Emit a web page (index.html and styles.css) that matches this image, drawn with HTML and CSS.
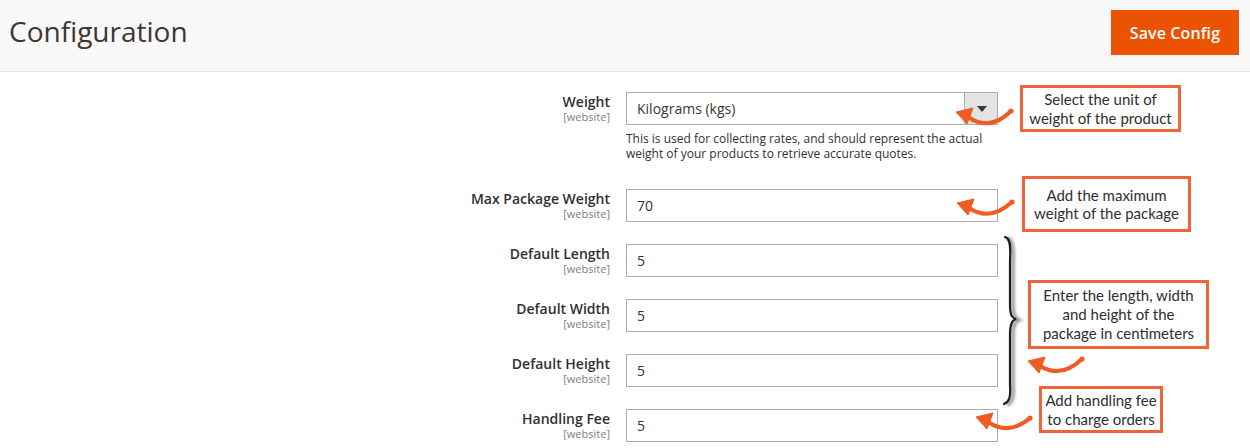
FILE: index.html
```html
<!DOCTYPE html>
<html lang="en">
<head>
<meta charset="utf-8">
<title>Configuration</title>
<link rel="stylesheet" href="styles.css">
</head>
<body>
<header class="page-header">
  <h1 class="page-title">Configuration</h1>
  <button class="btn-primary" type="button">Save Config</button>
</header>

<main class="config-form">
  <div class="field field-weight">
    <div class="field-label"><span class="name">Weight</span><span class="scope">[website]</span></div>
    <div class="field-control">
      <div class="select"><span class="select-value">Kilograms (kgs)</span><span class="select-arrow"></span></div>
      <p class="note">This is used for collecting rates, and should represent the actual weight of your products to retrieve accurate quotes.</p>
    </div>
  </div>
  <div class="field">
    <div class="field-label"><span class="name">Max Package Weight</span><span class="scope">[website]</span></div>
    <div class="field-control"><input class="input-text" type="text" value="70"></div>
  </div>
  <div class="field">
    <div class="field-label"><span class="name">Default Length</span><span class="scope">[website]</span></div>
    <div class="field-control"><input class="input-text" type="text" value="5"></div>
  </div>
  <div class="field">
    <div class="field-label"><span class="name">Default Width</span><span class="scope">[website]</span></div>
    <div class="field-control"><input class="input-text" type="text" value="5"></div>
  </div>
  <div class="field">
    <div class="field-label"><span class="name">Default Height</span><span class="scope">[website]</span></div>
    <div class="field-control"><input class="input-text" type="text" value="5"></div>
  </div>
  <div class="field">
    <div class="field-label"><span class="name">Handling Fee</span><span class="scope">[website]</span></div>
    <div class="field-control"><input class="input-text" type="text" value="5"></div>
  </div>
</main>

<div class="annotations">
  <svg class="arrows" width="1250" height="448" viewBox="0 0 1250 448" xmlns="http://www.w3.org/2000/svg">
    <defs>
      <filter id="sh" x="-50%" y="-10%" width="200%" height="120%">
        <feGaussianBlur stdDeviation="1.6"/>
      </filter>
    </defs>
    <g class="brace">
      <path d="M1007,238 C1012,239 1014,246 1013,261 L1013,305 C1013,315 1015,318 1019,320 C1015,321 1013,325 1013,335 L1013,386 C1014,399 1012,403 1007,405" fill="none" stroke="#888" stroke-width="3" filter="url(#sh)"/>
      <path d="M1005,237 C1010,238 1011,245 1010,260 L1010,305 C1010,315 1012,318 1016,319 C1012,320 1010,324 1010,334 L1010,385 C1011,398 1009,402 1004,404" fill="none" stroke="#1e1e1e" stroke-width="2.2" stroke-linecap="round"/>
    </g>
    <g class="arrow" fill="#f05a24" stroke="#f05a24">
      <path d="M968,117 Q990,132 1011,111" fill="none" stroke-width="4" stroke-linecap="round"/>
      <polygon points="956,112 973,108 967,124" stroke-width="1" stroke-linejoin="round"/>
      <circle cx="1011" cy="111" r="2.6" stroke="none"/>

      <path d="M969,208 Q990,222 1012,202" fill="none" stroke-width="4" stroke-linecap="round"/>
      <polygon points="957,203 974,199 968,215" stroke-width="1" stroke-linejoin="round"/>
      <circle cx="1012" cy="202" r="2.6" stroke="none"/>

      <path d="M1040,366 Q1061,379 1082,359" fill="none" stroke-width="4" stroke-linecap="round"/>
      <polygon points="1028,361 1045,357 1039,373" stroke-width="1" stroke-linejoin="round"/>
      <circle cx="1082" cy="359" r="2.6" stroke="none"/>

      <path d="M988,422 Q1009,436 1030,418" fill="none" stroke-width="4" stroke-linecap="round"/>
      <polygon points="976,417 993,413 987,429" stroke-width="1" stroke-linejoin="round"/>
      <circle cx="1030" cy="418" r="2.6" stroke="none"/>
    </g>
  </svg>
  <div class="callout callout-unit">Select the unit of<br>weight of the product</div>
  <div class="callout callout-max">Add the maximum<br>weight of the package</div>
  <div class="callout callout-dims">Enter the length, width<br>and height of the<br>package in centimeters</div>
  <div class="callout callout-fee">Add handling fee<br>to charge orders</div>
</div>
</body>
</html>
```

FILE: styles.css
```css
* { box-sizing: border-box; }

html, body {
  margin: 0;
  padding: 0;
  background: #ffffff;
  font-family: "Open Sans", "Liberation Sans", sans-serif;
  color: #303030;
}

body {
  position: relative;
  width: 1250px;
  height: 448px;
  overflow: hidden;
}

.page-header {
  display: flex;
  justify-content: space-between;
  align-items: flex-start;
  height: 72px;
  padding: 10px 11px 0 9px;
  background: #f8f8f8;
  border-bottom: 1px solid #e3e3e3;
}

.page-title {
  margin: 4px 0 0;
  font-size: 28px;
  line-height: 34px;
  font-weight: 400;
  color: #41362f;
}

.btn-primary {
  width: 128px;
  height: 45px;
  padding: 0;
  border: 1px solid #eb5202;
  background: #eb5202;
  color: #ffffff;
  font-family: "Open Sans", "Liberation Sans", sans-serif;
  font-size: 16px;
  font-weight: 600;
  letter-spacing: 0.1px;
}

.config-form {
  padding-top: 20px;
}

.field {
  display: grid;
  grid-template-columns: 610px 372px;
  column-gap: 16px;
  margin-bottom: 22px;
}

.field-weight {
  margin-bottom: 28px;
}

.field-label {
  display: flex;
  flex-direction: column;
  align-items: flex-end;
  padding-top: 1px;
  text-align: right;
}

.field-label .name {
  font-size: 14px;
  line-height: 18px;
  font-weight: 600;
  color: #303030;
}

.field-label .scope {
  font-size: 11px;
  line-height: 12px;
  color: #808080;
}

.select {
  display: flex;
  height: 33px;
  border: 1px solid #adadad;
  background: #ffffff;
}

.select-value {
  flex: 1;
  padding-left: 10px;
  font-size: 14px;
  line-height: 31px;
  color: #41362f;
}

.select-arrow {
  position: relative;
  width: 33px;
  background: #e3e3e3;
  border-left: 1px solid #adadad;
}

.select-arrow::after {
  content: "";
  position: absolute;
  left: 12px;
  top: 13px;
  border-left: 5px solid transparent;
  border-right: 5px solid transparent;
  border-top: 6px solid #41362f;
}

.note {
  margin: 6px 0 0;
  font-size: 12px;
  line-height: 15px;
  color: #303030;
}

.input-text {
  display: block;
  width: 372px;
  height: 33px;
  margin: 0;
  padding: 0 10px;
  border: 1px solid #adadad;
  border-radius: 0;
  background: #ffffff;
  font-family: "Open Sans", "Liberation Sans", sans-serif;
  font-size: 14px;
  color: #303030;
}

.annotations {
  position: absolute;
  left: 0;
  top: 0;
  width: 1250px;
  height: 448px;
  pointer-events: none;
}

.arrows {
  position: absolute;
  left: 0;
  top: 0;
}

.callout {
  position: absolute;
  display: flex;
  align-items: center;
  justify-content: center;
  border: 3px solid #f0643a;
  background: #ffffff;
  font-family: Lato, "Open Sans", sans-serif;
  font-size: 15px;
  line-height: 18.5px;
  color: #2e2e2e;
  text-align: center;
}

.callout-unit { left: 1020px; top: 85px; width: 161px; height: 47px; }
.callout-max { left: 1022px; top: 176px; width: 169px; height: 56px; }
.callout-dims { left: 1028px; top: 280px; width: 181px; height: 69px; line-height: 19px; }
.callout-fee { left: 1039px; top: 386px; width: 124px; height: 47px; }
```
